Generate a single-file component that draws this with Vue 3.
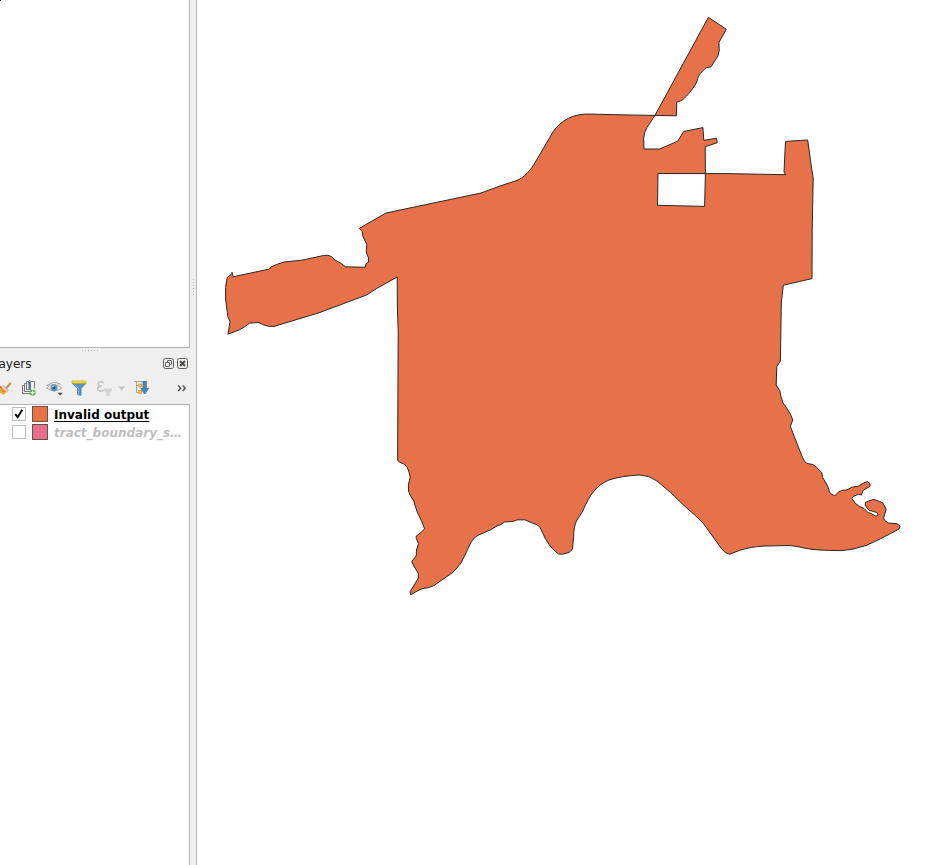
<script setup>
import { ref } from 'vue'

const layers = ref([
  { name: 'Invalid output', color: '#e77148', visible: true },
  { name: 'tract_boundary_s…', color: '#e76e8d', visible: false },
])

const boundary = `M655 115.3 L708.4 17.3 L726.3 29.3 L719 42.3 L719.2 50 L718.2 55.5 L711 66.8 L706.5 67.6
C702 71 698 76 697.4 80 C696 85 691 91 686.5 96 C684 98.5 682 100.5 680.5 100.8 L676.7 102.3 L676.5 115.8
L640 115.2 L590 114.1 C574 113.3 561 120 553 132 L536 161 C531 170 524 178 516 180.8
L500 186 L481 193 L386 213 L359.3 228.3 L362.2 231.5 L362.8 236 L366.8 244.5 L366.2 252 L368.5 258
L368.6 262 L366 263.8 L365.2 267.2 L345.5 266.8 L341.5 263.5 L335 260 L331.8 256.7 Q328 254.5 323.5 255.5
L303 260 L284 262 L276.5 264.5 L271 267 L269.5 269 L233.2 276.8 L232 272.3 L231.8 274 L227.2 277.5
Q224.6 287 225.6 299 L227.3 312.5 L227.8 316.5 L230 321.5 L228 334.2 L239 330 L244.5 326.8 L249.5 323.2
L258.5 322.4 L263.5 324.8 Q268 327 274 326.4 L319 312.8 L366.5 295 L377.5 288 L397.2 277
L397.4 308 L398.2 332 L397.6 460.2 L399.5 462.2 L404.5 464.3 Q407.5 467 408.7 471 L410.2 477
L408.4 485 L408.6 491 L410 495 L413.7 501 L417 511.5 L422 522 L424.5 528.8 L421.5 532 L416 536.4
L416.3 538.5 L418.5 543.5 L416.5 550 L416.2 556 L411.7 561.3 L414.3 567 L418.2 573 L418.4 578 L410 591.8
L410.8 594.8 L418 590.5 Q423 588 428 587.7 L434 585.6 L442 579.9 L452 573 Q457.5 568 461 563
L466 553 L470.5 543 Q474 537 478 535.3 L491 529.5 L497 526 L501.5 524.2 L504.5 522 L513 521.5
L517 519.9 L525 519.8 L529 521.7 L537.5 525 Q540.2 527 541.8 531 L545 538 Q549 545 552.5 548.7
L558.5 554 L562.5 554.2 L569 552.5 L572.5 549.2 L573.5 538 Q573.8 526 576.5 521 L583 510.5
C590 494 597 485 609 480 Q621 476 639 475 Q649 475 657 481 Q671 492 684 505.5 Q695 515 703 523
L722 549.3 Q725 553.3 729.5 554.2 L740 550.3 Q750 546.8 765 546 L789 545.5 Q797 546 804 548
Q815 550.6 842 550.6 Q852 550 866 545.5 Q879 540 899 529 L900 526 L897.2 523.8 L888.5 523
L884.6 520.3 L883.6 517.8 L884.8 514 L886.2 509.2 L882.8 502.8 L878.5 501 L873.8 499.4 L868.7 501
L865.5 502.3 L865.2 505.5 L869 510.3 L873.5 511.5 L877 512.6 L878.2 515 L875.8 516.2 L871.5 513.7
L868 512.5 L864 508.5 L859.2 506.2 L855 503 L851.8 498.3 L853.5 496.3 L858.5 494.3 L861.5 495
L862.8 490.8 L866 488.5 L870 486.4 L870 483.5 L867.3 481.6 L863.7 483 L857.8 486.3 L852.5 487
L847 489.8 L841.5 490.5 L837.8 492.5 Q836 495.4 834.5 495.6 Q832 495 829.6 492.5 Q828.6 487 826 483
L822.7 477.5 L821.8 472.7 L816.5 467.2 L813 464.5 L806.7 463.4 Q804.5 462 802.5 457.5 L790.3 426.3
L792.8 420 Q791.5 415 786.3 407.3 L783 403 L781 396.5 L779.8 390.7 L776.2 385 L776.8 366.5
L780.4 361 L781.3 303 L783.3 285.2 L812 278.6 L812.2 230 L813.2 178 L811.7 169 L807.7 140
L785.5 141.4 L784 172 L785.7 174.7 L725 173.6 L658 173.5 L657.5 205.3 L704.6 206.4 L705.4 174
L705.2 146.7 L717.2 142.7 L716.5 138.2 L703.8 140.4 L702.9 127.6 L683.7 131.5 L677.7 141.2
L659.5 149 L644 149 L643.7 138 Q644.5 131 647 127.5 Z`
</script>

<template>
  <main class="app">
    <aside class="side">
      <section class="browser"></section>
      <div class="handle horizontal"><i v-for="n in 6" :key="n"></i></div>
      <header class="title">
        <span>ayers</span>
        <svg class="dock-buttons" width="27" height="13" viewBox="0 0 27 13" fill="none">
          <rect x="1.5" y="1.5" width="10" height="10" rx="2" stroke="#5b5b57" />
          <path d="M5.5 5.5V3.5H9.5V7.5H7.5M3.5 5.5H7.5V9.5H3.5Z" stroke="#666" />
          <rect x="15.5" y="1.5" width="10" height="10" rx="2" stroke="#5b5b57" />
          <path d="M18 4 23 9M23 4 18 9" stroke="#494946" stroke-width="2" />
        </svg>
      </header>
      <nav class="toolbar">
        <svg class="tool" width="18" height="18" viewBox="0 0 18 18">
          <path d="M15.8 3.8 10.8 9.8" stroke="#bd955d" stroke-width="2.2" />
          <path d="m8.5 6.5 5.1 4.6-2 1.8-5.4-4.6Z" fill="#d5d2c5" stroke="#aaa393" stroke-width=".6" />
          <path d="m5.4 7.4 6.4 5.2L9 16 2 11.5Z" fill="#f5ac35" />
          <path d="m4.5 7.2 2.4 2M7.2 11.4l2 1.6" stroke="#e8615a" stroke-width="1.6" />
        </svg>
        <svg class="tool" width="18" height="18" viewBox="0 0 18 18" fill="none">
          <path d="M5 6.5H2.5V14.5H10.5M7 4.5H4.5V12.5H10.5" stroke="#777" />
          <path d="M9.5 10V2.5" stroke="#337cad" stroke-width="2" />
          <path d="M9 2.5H6.5V10.5H11M11 2.5H14.5V9.5M8.5 5V2.5Q9.5.2 10.5 2.5V9.5" stroke="#777" />
          <rect x="9.7" y="10.7" width="5.8" height="5.8" rx="1.8" fill="#63a86b" />
          <path d="M12.6 11.6v4M10.6 13.6h4" stroke="#f2fff2" stroke-width="1.3" />
        </svg>
        <svg class="tool" width="18" height="18" viewBox="0 0 18 18" fill="none">
          <path d="M1.5 9Q9 2 17 9 9 14.6 1.5 9Z" fill="#f1f3f4" stroke="#a6a6a6" />
          <path d="M1.5 7Q9 .8 15.5 5.5" stroke="#a6a6a6" stroke-width="1.1" />
          <circle cx="9" cy="8.8" r="3.6" fill="#679ac1" />
          <circle cx="9" cy="8.8" r="1.6" fill="#23577e" />
          <circle cx="8" cy="7.5" r=".7" fill="#e3f2fb" />
          <path d="M12.6 13.8h5.2l-2.6 2.7Z" fill="#444" />
        </svg>
        <svg class="tool" width="18" height="18" viewBox="0 0 18 18">
          <path d="M2.2 4.5 7.5 9.5v6l3.5 1V9.5l4.8-5Z" fill="#5c91bd" stroke="#487ba4" stroke-width=".8" />
          <path d="m4.5 5.5 4.2 4v6" fill="none" stroke="#82b1d5" />
          <path d="M2 2H15.8V4.4H2Z" fill="#f2df3d" stroke="#b9a722" stroke-width=".6" />
        </svg>
        <svg class="tool filter-expression" width="30" height="18" viewBox="0 0 30 18" fill="none">
          <path d="M7.7 3.8C5 1.3 1 3.5 2.6 6 3.3 7 4.5 7.2 6 7.2 3.3 7.2 1.2 8.2 1.6 10.2 2 12.7 5.5 12.6 7.8 11.2" stroke="#c4c4c4" stroke-width="1.6" />
          <path d="M7.5 9.5H16V11.5L13.7 13.5V17H10.2V13.5L7.5 11.5Z" fill="#d4d4d4" />
          <path d="M22 7.6h7.4L25.7 11.4Z" fill="#c7c7c7" />
        </svg>
        <svg class="tool" width="18" height="18" viewBox="0 0 18 18" fill="none">
          <path d="M3.5 3V13.5M3.5 6.5H6M3.5 13.5H6M1 2.5H14" stroke="#a2a2a2" />
          <rect x="5.8" y="5.2" width="2.6" height="2.6" fill="#fff1b4" stroke="#f09a20" stroke-width="1.2" />
          <rect x="5.8" y="11.5" width="2.6" height="2.6" fill="#fff1b4" stroke="#f09a20" stroke-width="1.2" />
          <path d="M10 2.5H13.3V9.5H15.7L11.7 15 7.9 9.5H10Z" fill="#4a87b9" stroke="#38719e" stroke-width=".8" />
        </svg>
        <svg class="more" width="10" height="9" viewBox="0 0 10 9" fill="none">
          <path d="m1.2 1.5 2.5 2.7L1.2 7M5.7 1.5l2.5 2.7L5.7 7" stroke="#565656" stroke-width="1.5" />
        </svg>
      </nav>
      <section class="tree">
        <div v-for="layer in layers" :key="layer.name" class="layer" :class="{ disabled: !layer.visible }">
          <span class="check">
            <svg v-if="layer.visible" width="12" height="12" viewBox="0 0 12 12" fill="none">
              <path d="M2.2 6.2 4.7 9.2 9.2 1.8" stroke="#000" stroke-width="1.9" />
            </svg>
          </span>
          <span class="swatch" :style="{ background: layer.color }"></span>
          <span class="name">{{ layer.name }}</span>
        </div>
      </section>
    </aside>
    <div class="handle vertical"><i v-for="n in 6" :key="n"></i></div>
    <section class="map">
      <svg width="748" height="865" viewBox="197 0 748 865">
        <path :d="boundary" fill="#e77148" fill-rule="evenodd" stroke="#292725" stroke-width="1" stroke-linejoin="round" />
      </svg>
    </section>
  </main>
</template>

<style>
body {
  overflow: hidden;
  background: #fff;
}
</style>

<style scoped>
.app {
  display: flex;
  width: 945px;
  height: 865px;
  background: #efefef;
  color: #1b1b1b;
  font: 12px "DejaVu Sans", sans-serif;
}
.side {
  width: 190px;
  flex: none;
  display: flex;
  flex-direction: column;
  overflow: hidden;
}
.browser {
  box-sizing: border-box;
  height: 348px;
  flex: none;
  background: linear-gradient(#000, #000) 0 0 / 1px 1px no-repeat #fff;
  border-right: 1px solid #b4b4b4;
  border-bottom: 1px solid #b4b4b4;
}
.handle {
  display: flex;
  align-items: center;
  justify-content: center;
  flex: none;
}
.handle i {
  width: 1px;
  height: 1px;
  background: #b5b5b5;
}
.horizontal {
  height: 5px;
  gap: 2px;
  padding-right: 10px;
}
.vertical {
  box-sizing: border-box;
  width: 7px;
  height: 865px;
  flex-direction: column;
  gap: 2px;
  padding-bottom: 291px;
  border-right: 1px solid #b4b4b4;
}
.title {
  height: 21px;
  flex: none;
  display: flex;
  align-items: center;
  justify-content: space-between;
}
.title span {
  margin-left: -1.5px;
}
.dock-buttons {
  margin-right: 1px;
}
.toolbar {
  height: 28px;
  flex: none;
  display: flex;
  align-items: center;
  gap: 7px;
  margin-left: -5px;
  margin-bottom: 2px;
}
.tool {
  flex: none;
}
.filter-expression {
  margin-left: 1px;
}
.more {
  margin-left: auto;
  margin-right: 3px;
}
.tree {
  box-sizing: border-box;
  flex: 1;
  background: #fff;
  border-top: 1px solid #b4b4b4;
  border-right: 1px solid #b4b4b4;
}
.layer {
  height: 18px;
  display: flex;
  align-items: center;
  padding-left: 12px;
  font-weight: 700;
  color: #000;
}
.check {
  box-sizing: border-box;
  width: 14px;
  height: 14px;
  border: 1px solid #bcbcbc;
  background: #fff;
}
.check svg {
  display: block;
}
.swatch {
  box-sizing: border-box;
  width: 16px;
  height: 16px;
  margin-left: 6px;
  border: 1px solid #714d42;
}
.name {
  margin-left: 6px;
  padding-top: 2px;
  white-space: nowrap;
  text-decoration: underline 1px;
  text-underline-offset: 2px;
}
.disabled .name {
  color: #bebebe;
  font-style: italic;
  text-decoration: none;
}
.map {
  width: 748px;
  height: 865px;
  background: #fff;
}
.map svg {
  display: block;
}
</style>
